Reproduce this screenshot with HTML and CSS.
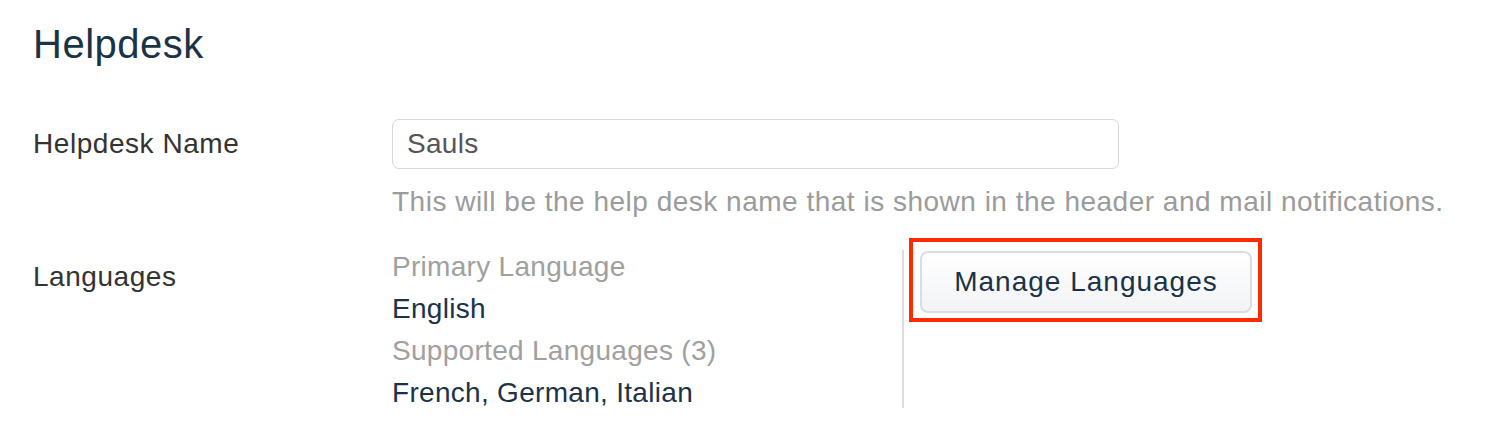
FILE: index.html
```html
<!DOCTYPE html>
<html>
<head>
<meta charset="utf-8">
<link rel="stylesheet" href="styles.css">
</head>
<body>
<div class="page">
  <h1 class="title">Helpdesk</h1>
  <div class="row row-name">
    <div class="label label-name">Helpdesk Name</div>
    <div class="field">
      <div class="input">Sauls</div>
      <div class="help">This will be the help desk name that is shown in the header and mail notifications.</div>
    </div>
  </div>
  <div class="row row-lang">
    <div class="label label-lang">Languages</div>
    <div class="lang-list">
      <div class="muted">Primary Language</div>
      <div class="value">English</div>
      <div class="muted">Supported Languages (3)</div>
      <div class="value">French, German, Italian</div>
    </div>
    <div class="divider"></div>
    <div class="actions">
      <div class="btn-wrap">
        <button class="btn">Manage Languages</button>
      </div>
    </div>
  </div>
</div>
</body>
</html>
```
FILE: styles.css
```css
html, body {
  margin: 0;
  padding: 0;
  background: #ffffff;
}
body {
  font-family: "Liberation Sans", Arial, Helvetica, sans-serif;
  color: #333333;
}
.page {
  padding: 20px 33px 0 33px;
}
.title {
  margin: 0;
  font-size: 40px;
  line-height: 48px;
  font-weight: normal;
  letter-spacing: 0.5px;
  color: #1c3247;
}
.row {
  display: flex;
}
.row-name {
  margin-top: 51px;
}
.label {
  width: 359px;
  flex: none;
  font-size: 28px;
  letter-spacing: 0.55px;
  color: #333333;
}
.label-name {
  line-height: 50px;
}
.label-lang {
  line-height: 42px;
  padding-top: 10px;
}
.field {
  flex: 1;
}
.input {
  box-sizing: border-box;
  width: 727px;
  height: 50px;
  border: 1.5px solid #d3d9da;
  border-radius: 7px;
  padding: 0 14px;
  font-size: 28px;
  line-height: 47px;
  letter-spacing: 0.3px;
  color: #555555;
}
.help {
  margin-top: 12px;
  font-size: 28px;
  line-height: 42px;
  letter-spacing: 0.5px;
  color: #9b9b9b;
  white-space: nowrap;
}
.row-lang {
  margin-top: 23px;
}
.lang-list {
  width: 510px;
  flex: none;
  font-size: 28px;
  line-height: 42px;
  letter-spacing: 0.3px;
}
.muted {
  color: #a0a0a0;
}
.value {
  color: #1c3247;
}
.divider {
  width: 2px;
  flex: none;
  background: #dddddd;
  margin: 4px 0 6px 0;
}
.actions {
  padding-left: 16px;
  padding-top: 5px;
}
.btn-wrap {
  position: relative;
}
.btn-wrap::after {
  content: "";
  position: absolute;
  left: -11px;
  top: -13px;
  right: -10px;
  bottom: -9px;
  border: 4px solid #ff2a00;
  pointer-events: none;
}
.btn {
  display: block;
  box-sizing: border-box;
  width: 332px;
  height: 62px;
  border: 2px solid #d8dde2;
  border-radius: 8px;
  background: linear-gradient(#ffffff, #f1f3f5);
  font-family: "Liberation Sans", Arial, Helvetica, sans-serif;
  font-size: 28px;
  letter-spacing: 1px;
  color: #1c3247;
  padding: 0;
}
```
